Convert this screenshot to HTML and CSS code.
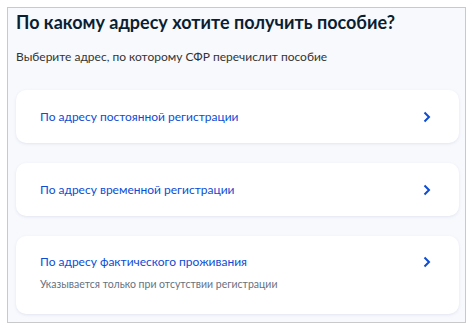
FILE: index.html
```html
<!DOCTYPE html>
<html lang="ru">
<head>
    <meta charset="UTF-8">
    <title>Адрес для пособия</title>
    <link rel="stylesheet" href="styles.css">
</head>
<body>

<div class="frame">
    <h2 class="title">По какому адресу хотите получить пособие?</h2>
    <p class="subtitle">Выберите адрес, по которому СФР перечислит пособие</p>

    <div class="options">
        <a class="option" href="#">
            <div class="option-text">
                <span class="option-title">По адресу постоянной регистрации</span>
            </div>
            <svg class="chevron" width="8" height="12" viewBox="0 0 8 12"><path d="M1.5 1.5 L6 6 L1.5 10.5" fill="none" stroke="#0d4cd3" stroke-width="2"/></svg>
        </a>
        <a class="option" href="#">
            <div class="option-text">
                <span class="option-title">По адресу временной регистрации</span>
            </div>
            <svg class="chevron" width="8" height="12" viewBox="0 0 8 12"><path d="M1.5 1.5 L6 6 L1.5 10.5" fill="none" stroke="#0d4cd3" stroke-width="2"/></svg>
        </a>
        <a class="option option-tall" href="#">
            <div class="option-text">
                <span class="option-title">По адресу фактического проживания</span>
                <span class="option-hint">Указывается только при отсутствии регистрации</span>
            </div>
            <svg class="chevron" width="8" height="12" viewBox="0 0 8 12"><path d="M1.5 1.5 L6 6 L1.5 10.5" fill="none" stroke="#0d4cd3" stroke-width="2"/></svg>
        </a>
    </div>
</div>

</body>
</html>
```

FILE: styles.css
```css
body {
    margin: 0;
    font-family: Lato, "Noto Sans", sans-serif;
    background: #fff;
}
.frame {
    margin: 7px;
    height: 314px;
    border: 1px solid #c9c9cc;
    background: #f8f9fd;
    padding: 0 6px 0 8px;
}
.title {
    margin: 0;
    padding-top: 2px;
    font-size: 18px;
    font-weight: 700;
    color: #0b1f33;
    line-height: 24px;
}
.subtitle {
    margin: 14px 0 0;
    font-size: 12px;
    color: #333;
    line-height: 18px;
}
.options {
    margin-top: 24px;
    display: flex;
    flex-direction: column;
    gap: 20px;
}
.option {
    display: flex;
    align-items: center;
    height: 53px;
    padding: 0 28px 0 24px;
    background: #fff;
    border-radius: 10px;
    box-shadow: 0 1px 3px rgba(100, 120, 170, 0.15);
    text-decoration: none;
}
.option-tall {
    height: 78px;
    align-items: flex-start;
}
.option-text {
    flex: 1;
    display: flex;
    flex-direction: column;
}
.option-title {
    font-size: 12px;
    color: #0d4cd3;
    line-height: 18px;
}
.option-tall .option-text {
    padding-top: 17px;
}
.option-tall .chevron {
    margin-top: 20px;
}
.option-hint {
    margin-top: 5px;
    font-size: 10.5px;
    color: #66727f;
    line-height: 16px;
}
```
